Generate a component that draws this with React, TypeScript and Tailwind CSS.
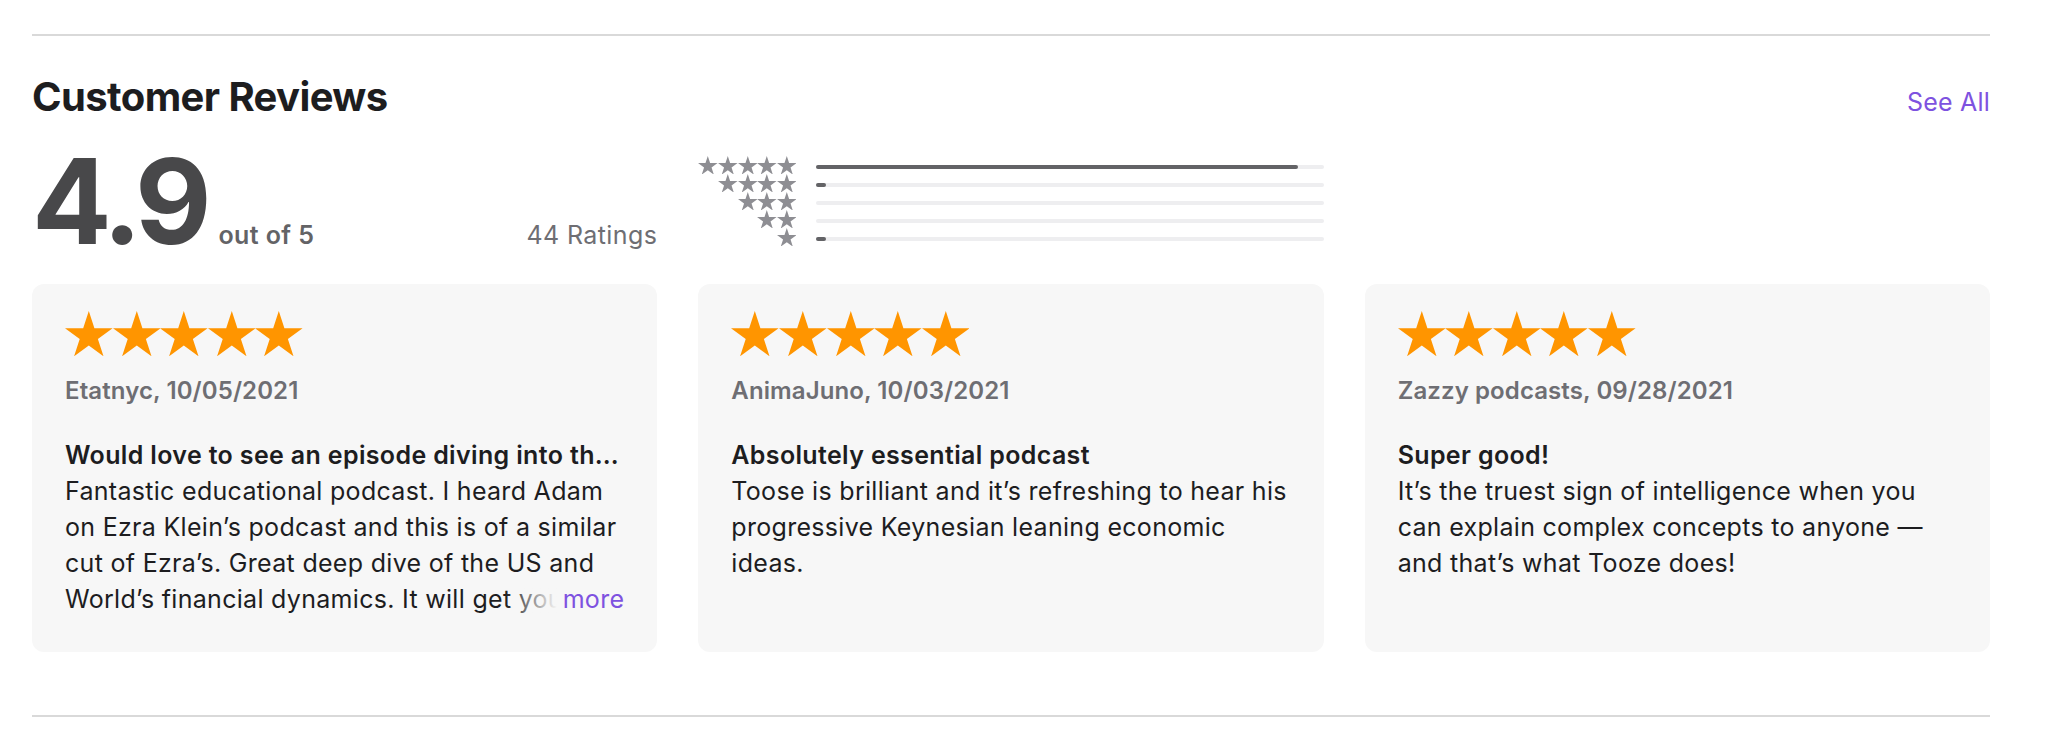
import React from "react";

const STAR = "95.1,0 117.55,69.1 190.2,69.1 131.4,111.8 153.9,180.9 95.1,138.2 36.3,180.9 58.8,111.8 0,69.1 72.65,69.1";

function Star({ className, color }: { className: string; color: string }) {
  return (
    <svg viewBox="0 0 190.2 180.9" className={className} aria-hidden="true">
      <polygon points={STAR} fill={color} />
    </svg>
  );
}

const hist = [
  { stars: 5, pct: 95 },
  { stars: 4, pct: 2 },
  { stars: 3, pct: 0 },
  { stars: 2, pct: 0 },
  { stars: 1, pct: 2 },
];

const reviews = [
  {
    author: "Etatnyc, 10/05/2021",
    title: "Would love to see an episode diving into th…",
    body: "Fantastic educational podcast. I heard Adam on Ezra Klein’s podcast and this is of a similar cut of Ezra’s. Great deep dive of the US and World’s financial dynamics. It will get you up to speed on the global economy and the forces that shape it.",
    more: true,
  },
  {
    author: "AnimaJuno, 10/03/2021",
    title: "Absolutely essential podcast",
    body: "Toose is brilliant and it’s refreshing to hear his progressive Keynesian leaning economic ideas.",
    more: false,
  },
  {
    author: "Zazzy podcasts, 09/28/2021",
    title: "Super good!",
    body: "It’s the truest sign of intelligence when you can explain complex concepts to anyone — and that’s what Tooze does!",
    more: false,
  },
];

export default function App() {
  return (
    <div className="w-[2048px] h-[734px] bg-white pt-[34px] font-['Inter','Liberation_Sans',sans-serif] antialiased">
      <div className="ml-[32px] w-[1958px]">
        <div className="h-[2px] bg-[#d9d9d9]" />
        <div className="mt-[37px] flex items-baseline justify-between">
          <h2 className="text-[40px] leading-[48px] font-bold tracking-[-0.6px] text-[#1d1d1f]">Customer Reviews</h2>
          <a className="text-[25px] leading-[32px] tracking-[0.2px] text-[#7e52e0]">See All</a>
        </div>

        <div className="mt-[21px] grid grid-cols-3 gap-x-[41px] items-start">
          <div className="flex items-baseline">
            <span className="text-[118px] leading-[118px] font-bold tracking-[-0.045em] text-[#48484a]">4.9</span>
            <span className="ml-[12px] text-[25px] font-semibold tracking-[0.4px] text-[#636366]">out of 5</span>
            <span className="ml-auto text-[25px] tracking-[0.4px] text-[#6e6e73]">44 Ratings</span>
          </div>
          <div className="mt-[14px] flex flex-col">
            {hist.map((h) => (
              <div key={h.stars} className="flex h-[18px] items-center">
                <div className="flex w-[98px] justify-end">
                  {Array.from({ length: h.stars }).map((_, i) => (
                    <Star key={i} className="w-[19.6px] h-[18.6px]" color="#8e8e93" />
                  ))}
                </div>
                <div className="ml-[20px] mt-[4px] h-[4px] flex-1 rounded-full bg-[#eeeef0]">
                  <div className="h-[4px] rounded-full bg-[#636366]" style={{ width: `${h.pct}%` }} />
                </div>
              </div>
            ))}
          </div>
          <div />
        </div>

        <div className="mt-[24px] grid grid-cols-3 gap-x-[41px]">
          {reviews.map((r) => (
            <div key={r.author} className="rounded-[12px] bg-[#f7f7f7] pt-[27px] px-[33px] pb-[35px]">
              <div className="flex h-[45px]">
                {Array.from({ length: 5 }).map((_, i) => (
                  <Star key={i} className="w-[47.6px] h-[45.3px]" color="#ff9500" />
                ))}
              </div>
              <div className="mt-[17px] text-[24px] leading-[36px] font-semibold tracking-[0.1px] text-[#6e6e73]">{r.author}</div>
              <div className="mt-[28px] whitespace-nowrap text-[25px] leading-[36px] font-semibold tracking-[0.35px] text-[#1d1d1f]">{r.title}</div>
              <div className="relative">
                <p className="line-clamp-4 text-[25px] leading-[36px] tracking-[0.3px] text-[#1d1d1f]">{r.body}</p>
                {r.more && (
                  <div className="absolute bottom-0 right-0 flex h-[36px] items-stretch">
                    <div className="w-[52px] bg-gradient-to-r from-[#f7f7f700] to-[#f7f7f7]" />
                    <span className="bg-[#f7f7f7] pl-[6px] text-[25px] leading-[36px] tracking-[0.3px] text-[#7e52e0]">more</span>
                  </div>
                )}
              </div>
            </div>
          ))}
        </div>

        <div className="mt-[63px] h-[2px] bg-[#d9d9d9]" />
      </div>
    </div>
  );
}
